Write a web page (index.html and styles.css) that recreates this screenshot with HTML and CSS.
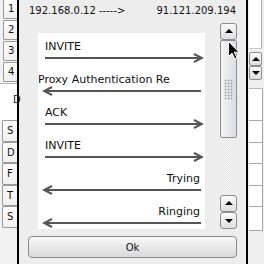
FILE: index.html
```html
<!DOCTYPE html>
<html lang="en">
<head>
    <meta charset="UTF-8">
    <title>SIP Flow</title>
    <link rel="stylesheet" href="styles.css">
</head>
<body>
    <div class="screen">
        <div class="left-strip">
            <div class="tabs num-tabs">
                <div class="tab">1</div>
                <div class="tab">2</div>
                <div class="tab">3</div>
                <div class="tab">4</div>
            </div>
            <div class="blank-area"><span class="peek">D</span></div>
            <div class="tabs letter-tabs">
                <div class="tab">S</div>
                <div class="tab">D</div>
                <div class="tab">F</div>
                <div class="tab">T</div>
                <div class="tab">S</div>
            </div>
        </div>

        <div class="dialog">
            <div class="header">
                <span>192.168.0.12 -----&gt;</span>
                <span>91.121.209.194</span>
            </div>
            <div class="main">
                <div class="canvas-wrap">
                    <div class="canvas">
                        <div class="msg">
                            <div class="label">INVITE</div>
                            <svg class="arrow" width="162" height="10" viewBox="0 0 162 10"><path d="M3 5H160M152 1L160 5L152 9"/></svg>
                        </div>
                        <div class="msg reply">
                            <div class="label long">Proxy Authentication Re</div>
                            <svg class="arrow" width="162" height="10" viewBox="0 0 162 10"><path d="M2 5H159M10 1L2 5L10 9"/></svg>
                        </div>
                        <div class="msg">
                            <div class="label">ACK</div>
                            <svg class="arrow" width="162" height="10" viewBox="0 0 162 10"><path d="M3 5H160M152 1L160 5L152 9"/></svg>
                        </div>
                        <div class="msg">
                            <div class="label">INVITE</div>
                            <svg class="arrow" width="162" height="10" viewBox="0 0 162 10"><path d="M3 5H160M152 1L160 5L152 9"/></svg>
                        </div>
                        <div class="msg reply">
                            <div class="label">Trying</div>
                            <svg class="arrow" width="162" height="10" viewBox="0 0 162 10"><path d="M2 5H159M10 1L2 5L10 9"/></svg>
                        </div>
                        <div class="msg reply">
                            <div class="label">Ringing</div>
                            <svg class="arrow" width="162" height="10" viewBox="0 0 162 10"><path d="M2 5H159M10 1L2 5L10 9"/></svg>
                        </div>
                    </div>
                </div>
                <div class="scrollbar">
                    <div class="sb-btn up"></div>
                    <div class="sb-thumb">
                        <div class="grip"></div>
                    </div>
                    <div class="sb-track"></div>
                    <div class="sb-btn up"></div>
                    <div class="sb-btn down"></div>
                </div>
            </div>
            <button class="ok-btn">Ok</button>
        </div>

        <div class="right-strip">
            <div class="r-top"></div>
            <div class="spin">
                <div class="spin-btn up"></div>
                <div class="spin-btn down"></div>
            </div>
            <div class="r-table">
                <div class="r-row"></div>
                <div class="r-row"></div>
                <div class="r-row"></div>
                <div class="r-row"></div>
                <div class="r-row"></div>
            </div>
        </div>

        <svg class="cursor" width="12" height="19" viewBox="0 0 12 19">
            <path d="M0.5 0.5V15.5L4 12L6.8 18L9 17L6.3 11.2H11Z" fill="#000" stroke="#fff" stroke-width="1"/>
        </svg>
    </div>
</body>
</html>
```

FILE: styles.css
```css
body {
    margin: 0;
    font-family: "DejaVu Sans", sans-serif;
    font-size: 10px;
    color: #111;
}
.screen {
    position: relative;
    width: 264px;
    height: 264px;
    overflow: hidden;
    display: flex;
    background: #efefef;
}

/* background window, left */
.left-strip {
    width: 17px;
    display: flex;
    flex-direction: column;
    background: #f2f2f2;
}
.tabs {
    display: flex;
    flex-direction: column;
}
.num-tabs {
    gap: 1px;
    padding-left: 3px;
}
.tab {
    height: 20px;
    box-sizing: border-box;
    border: 1px solid #9a9a9a;
    border-right: none;
    border-radius: 2px 0 0 2px;
    background: linear-gradient(#fdfdfd, #f0f0f0);
    padding-left: 4px;
    line-height: 18px;
}
.num-tabs .tab:first-child {
    margin-top: -1px;
}
.blank-area {
    height: 36px;
    margin-top: 1px;
    background: #fff;
    border-top: 1px solid #b8b8b8;
    position: relative;
}
.peek {
    position: absolute;
    left: 13px;
    top: 10px;
    line-height: 12px;
}
.letter-tabs {
    padding-left: 2px;
}
.letter-tabs .tab {
    height: 21.6px;
    line-height: 20px;
}

/* dialog */
.dialog {
    width: 209px;
    border-left: 2px solid #000;
    border-right: 2px solid #000;
    background: #ededed;
    display: flex;
    flex-direction: column;
    padding: 0 9px;
}
.header {
    height: 23px;
    box-sizing: border-box;
    padding: 5px 1px 0 1px;
    display: flex;
    justify-content: space-between;
    line-height: 12px;
}
.main {
    display: flex;
    height: 206px;
}
.canvas-wrap {
    flex: 1;
    padding: 10px 15px 0 10px;
}
.canvas {
    background: #fff;
    height: 100%;
    overflow: hidden;
}
.msg {
    height: 33px;
    box-sizing: border-box;
    padding-top: 7px;
}
.label {
    font-size: 11px;
    line-height: 13px;
    height: 13px;
    padding-left: 7px;
    white-space: nowrap;
}
.reply .label {
    text-align: right;
    padding-right: 5px;
    padding-left: 0;
}
.reply .label.long {
    text-align: left;
}
.arrow {
    display: block;
    margin-left: 4px;
}
.arrow path {
    fill: none;
    stroke: #555;
    stroke-width: 2;
}

/* scrollbar */
.scrollbar {
    width: 17px;
    display: flex;
    flex-direction: column;
}
.sb-btn {
    height: 17px;
    box-sizing: border-box;
    border: 1px solid #8c8c8c;
    border-radius: 3px;
    background: linear-gradient(#fbfbfb, #dedede);
    position: relative;
}
.sb-btn::after {
    content: "";
    position: absolute;
    left: 4px;
    top: 5px;
    border-left: 4px solid transparent;
    border-right: 4px solid transparent;
}
.sb-btn.up::after {
    border-bottom: 4px solid #000;
}
.sb-btn.down::after {
    border-top: 4px solid #000;
    top: 6px;
}
.sb-thumb {
    height: 98px;
    box-sizing: border-box;
    border: 1px solid #8c8c8c;
    border-radius: 2px;
    background: linear-gradient(to right, #f4f4f6, #dcdde2);
    display: flex;
    align-items: center;
    justify-content: center;
}
.grip {
    width: 9px;
    height: 21px;
    background: radial-gradient(circle, #a8a8b0 0.8px, transparent 1.2px) 0 0 / 3px 3px;
}
.sb-track {
    flex: 1;
    margin: 0 1px;
    background: repeating-conic-gradient(#e2e2e2 0 25%, #fafafa 0 50%) 0 0 / 2px 2px;
}

.ok-btn {
    margin-top: 7px;
    height: 22px;
    border: 1px solid #8a8a8a;
    border-radius: 4px;
    background: linear-gradient(#f8f8f8, #d9d9d9);
    font-family: "DejaVu Sans", sans-serif;
    font-size: 10px;
    color: #111;
    padding: 0;
}

/* background window, right */
.right-strip {
    flex: 1;
    display: flex;
    flex-direction: column;
    background: #efefef;
    padding-left: 1px;
}
.r-top {
    height: 48px;
    background: #fff;
    border-right: 1px solid #b0b0b0;
    border-bottom: 1px solid #c8c8c8;
    margin-right: 2px;
}
.spin {
    margin-top: 3px;
    width: 13px;
}
.spin-btn {
    height: 14px;
    box-sizing: border-box;
    border: 1px solid #8c8c8c;
    border-radius: 2px;
    background: linear-gradient(#fbfbfb, #dedede);
    position: relative;
}
.spin-btn::after {
    content: "";
    position: absolute;
    left: 2px;
    top: 4px;
    border-left: 4px solid transparent;
    border-right: 4px solid transparent;
}
.spin-btn.up::after {
    border-bottom: 4px solid #000;
}
.spin-btn.down::after {
    border-top: 4px solid #000;
}
.r-table {
    margin-top: 8px;
    height: 143px;
    background: #fff;
    border-top: 1px solid #b8b8b8;
    border-bottom: 1px solid #a8a8a8;
    padding-top: 31px;
    margin-right: 1px;
    border-right: 1px solid #a8a8a8;
    box-sizing: border-box;
}
.r-row {
    height: 21.6px;
    border-top: 1px solid #a8a8a8;
    box-sizing: border-box;
}

.cursor {
    position: absolute;
    left: 228px;
    top: 41px;
}
```
